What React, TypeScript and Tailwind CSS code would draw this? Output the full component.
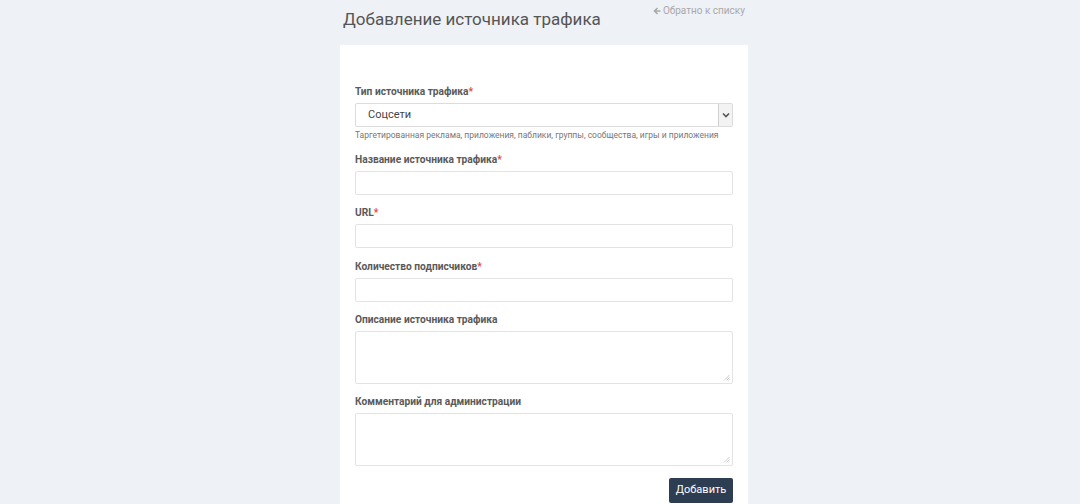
import React from 'react';

const Label = ({ text, required }: { text: string; required?: boolean }) => (
  <label className="block text-[10.2px] font-bold text-[#5a5a5a] leading-[14px] mb-[4px]">
    {text}
    {required && <span className="text-[#e04848]">*</span>}
  </label>
);

const Input = () => (
  <input
    type="text"
    className="block w-full h-[24px] border border-[#e3e3e3] rounded-[2px] bg-white px-2 text-[11px] outline-none"
  />
);

// textarea with a faint resize grip like in the old browser
const Textarea = () => (
  <div className="relative">
    <textarea className="block w-full h-[53px] resize-none border border-[#e3e3e3] rounded-[2px] bg-white px-2 py-1 text-[11px] outline-none" />
    <svg className="absolute right-[3px] bottom-[3px] pointer-events-none" width="7" height="7" viewBox="0 0 7 7">
      <path d="M6.5 1 L1 6.5 M6.5 3.5 L3.5 6.5 M6.5 5.5 L5.5 6.5" stroke="#c8c8c8" strokeWidth="0.9" />
    </svg>
  </div>
);

export default function App() {
  return (
    <div
      className="h-screen overflow-hidden bg-[#eef1f6] flex justify-center pl-[8px]"
      style={{ fontFamily: 'Roboto, "Liberation Sans", Arial, sans-serif' }}
    >
      <div className="w-[408px] flex flex-col">
        <div className="flex justify-between items-start h-[45px] shrink-0">
          <h1 className="text-[17px] text-[#555] pl-[3px] pt-[8px] leading-[22px]">
            Добавление источника трафика
          </h1>
          <a className="text-[10px] text-[#a9a9a9] pt-[3px] pr-[3px] flex items-center gap-[2px] cursor-pointer">
            <svg width="8" height="8" viewBox="0 0 8 8">
              <path d="M4.5 1 L1.5 4 L4.5 7 M1.5 4 H7.5" stroke="#a9a9a9" strokeWidth="1.6" fill="none" />
            </svg>
            Обратно к списку
          </a>
        </div>

        <div className="bg-white px-[15px] pt-[40px] pb-4 shrink-0">
          <Label text="Тип источника трафика" required />
          <div className="flex h-[24px] border border-[#dcdcdc] rounded-[2px]">
            <div className="flex-1 flex items-center pl-[12px] text-[11px] text-[#444]">Соцсети</div>
            <div className="w-[14px] border-l border-[#cfcfcf] bg-[#f3f3f3] flex items-center justify-center">
              <svg width="8" height="6" viewBox="0 0 8 6">
                <path d="M1 1.5 L4 4.5 L7 1.5" stroke="#555" strokeWidth="1.6" fill="none" />
              </svg>
            </div>
          </div>
          <p className="text-[8.5px] text-[#777] mt-[3px] leading-[11px] whitespace-nowrap">
            Таргетированная реклама, приложения, паблики, группы, сообщества, игры и приложения
          </p>

          <div className="mt-[12px]">
            <Label text="Название источника трафика" required />
            <Input />
          </div>
          <div className="mt-[11px]">
            <Label text="URL" required />
            <Input />
          </div>
          <div className="mt-[12px]">
            <Label text="Количество подписчиков" required />
            <Input />
          </div>
          <div className="mt-[11px]">
            <Label text="Описание источника трафика" />
            <Textarea />
          </div>
          <div className="mt-[11px]">
            <Label text="Комментарий для администрации" />
            <Textarea />
          </div>
          <div className="flex justify-end mt-[12px]">
            <button className="bg-[#2d3e52] text-white text-[11px] h-[25px] w-[64px] rounded-[2px]">
              Добавить
            </button>
          </div>
        </div>
      </div>
    </div>
  );
}
